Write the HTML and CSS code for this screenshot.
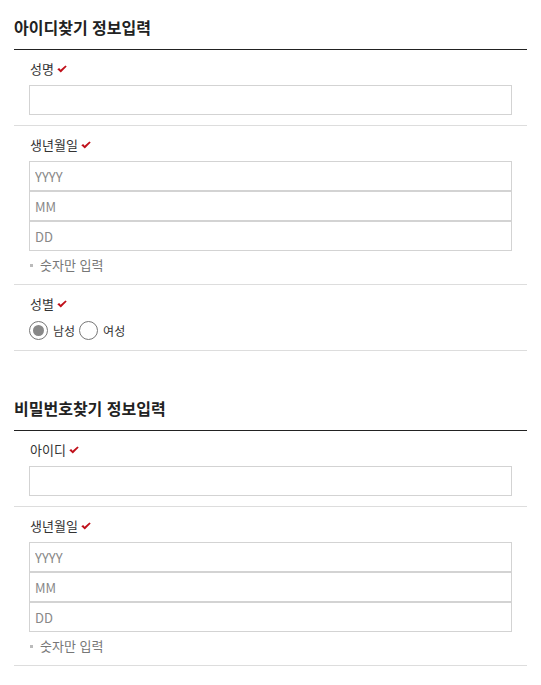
FILE: index.html
```html
<!DOCTYPE html>
<html lang="ko">
<head>
  <meta charset="UTF-8">
  <meta name="viewport" content="width=device-width, initial-scale=1.0">
  <title>아이디/비밀번호 찾기</title>
  <link rel="stylesheet" href="styles.css">
</head>
<body>
  <div class="container">

    <!-- 아이디 찾기 -->
    <section class="find-section">
      <h2 class="find-title">아이디찾기 정보입력</h2>

      <div class="field">
        <label class="field-label" for="name">성명 <span class="req"><svg width="10" height="8" viewBox="0 0 10 8"><path d="M0.3 4.3 L2.2 3 L3.6 4.8 L8.4 0.4 L9.7 1.4 L3.8 7.6 Z" fill="#c0101a"/></svg></span></label>
        <input class="text-input" type="text" id="name">
      </div>

      <div class="field">
        <label class="field-label" for="birthYear">생년월일 <span class="req"><svg width="10" height="8" viewBox="0 0 10 8"><path d="M0.3 4.3 L2.2 3 L3.6 4.8 L8.4 0.4 L9.7 1.4 L3.8 7.6 Z" fill="#c0101a"/></svg></span></label>
        <div class="date-group">
          <input class="text-input" type="text" id="birthYear" placeholder="YYYY">
          <input class="text-input" type="text" placeholder="MM">
          <input class="text-input" type="text" placeholder="DD">
        </div>
        <p class="hint">숫자만 입력</p>
      </div>

      <div class="field">
        <span class="field-label">성별 <span class="req"><svg width="10" height="8" viewBox="0 0 10 8"><path d="M0.3 4.3 L2.2 3 L3.6 4.8 L8.4 0.4 L9.7 1.4 L3.8 7.6 Z" fill="#c0101a"/></svg></span></span>
        <div class="radio-group">
          <label class="radio"><input type="radio" name="gender" checked> 남성</label>
          <label class="radio"><input type="radio" name="gender"> 여성</label>
        </div>
      </div>
    </section>

    <!-- 비밀번호 찾기 -->
    <section class="find-section second">
      <h2 class="find-title">비밀번호찾기 정보입력</h2>

      <div class="field">
        <label class="field-label" for="userId">아이디 <span class="req"><svg width="10" height="8" viewBox="0 0 10 8"><path d="M0.3 4.3 L2.2 3 L3.6 4.8 L8.4 0.4 L9.7 1.4 L3.8 7.6 Z" fill="#c0101a"/></svg></span></label>
        <input class="text-input" type="text" id="userId">
      </div>

      <div class="field">
        <label class="field-label" for="birthYear2">생년월일 <span class="req"><svg width="10" height="8" viewBox="0 0 10 8"><path d="M0.3 4.3 L2.2 3 L3.6 4.8 L8.4 0.4 L9.7 1.4 L3.8 7.6 Z" fill="#c0101a"/></svg></span></label>
        <div class="date-group">
          <input class="text-input" type="text" id="birthYear2" placeholder="YYYY">
          <input class="text-input" type="text" placeholder="MM">
          <input class="text-input" type="text" placeholder="DD">
        </div>
        <p class="hint">숫자만 입력</p>
      </div>
    </section>

  </div>
</body>
</html>
```

FILE: styles.css
```css
body {
  margin: 0;
  font-family: "Noto Sans CJK KR", "Noto Sans", sans-serif;
  color: #333;
  background: #fff;
}
.container {
  padding: 0 14px;
}
.find-section.second {
  margin-top: 30px;
}
.find-title {
  margin: 0;
  padding: 17px 0 12px;
  font-size: 16px;
  line-height: 20px;
  font-weight: bold;
  color: #222;
  border-bottom: 1px solid #222;
}
.field {
  padding: 10px 15px 10px 15px;
  border-bottom: 1px solid #ddd;
}
.field-label {
  display: flex;
  align-items: center;
  gap: 3px;
  font-size: 13px;
  line-height: 18px;
  color: #333;
  margin-bottom: 7px;
  padding-left: 1px;
}
.req {
  display: inline-flex;
  margin-top: -1px;
}
.text-input {
  display: block;
  box-sizing: border-box;
  width: 100%;
  height: 30px;
  margin: 0;
  padding: 0 5px;
  border: 1px solid #d3d3d3;
  border-radius: 0;
  font-family: "Noto Sans CJK KR", "Noto Sans", sans-serif;
  font-size: 13px;
  color: #333;
  outline: none;
}
.text-input::placeholder {
  color: #888;
}
.hint {
  display: flex;
  align-items: center;
  margin: 5px 0 0;
  padding-left: 1px;
  font-size: 13px;
  line-height: 18px;
  color: #777;
}
.hint::before {
  content: "";
  width: 3px;
  height: 3px;
  background: #bbb;
  margin-right: 7px;
}
.radio-group {
  display: flex;
  align-items: center;
  height: 20px;
  gap: 4px;
}
.radio {
  display: flex;
  align-items: center;
  font-size: 12px;
  color: #333;
}
.radio input {
  appearance: none;
  -webkit-appearance: none;
  width: 19px;
  height: 19px;
  margin: 0 5px 0 0;
  border: 1px solid #777;
  border-radius: 50%;
  display: flex;
  align-items: center;
  justify-content: center;
}
.radio input:checked::after {
  content: "";
  width: 11px;
  height: 11px;
  border-radius: 50%;
  background: #888;
}
```
